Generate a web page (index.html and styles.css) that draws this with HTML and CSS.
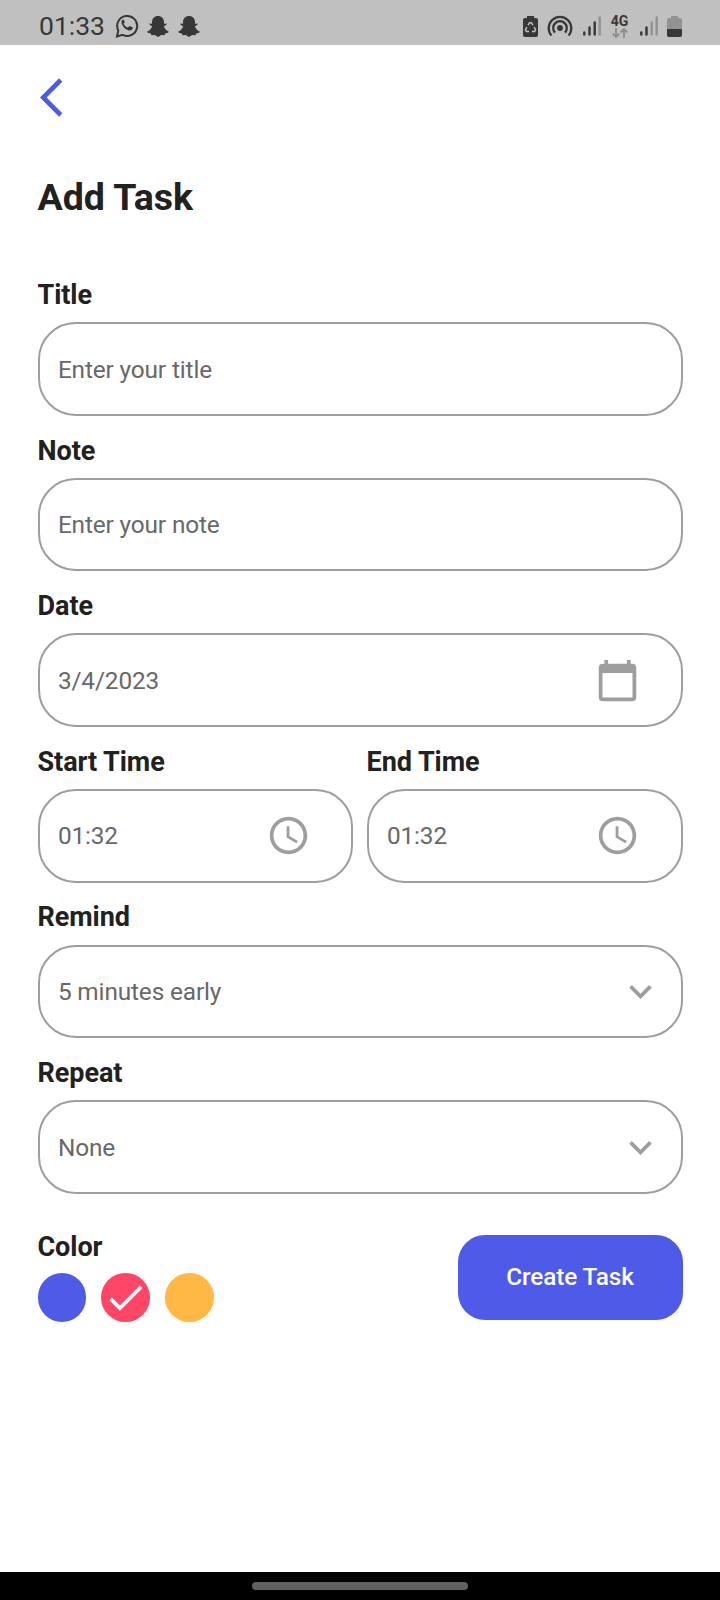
FILE: index.html
```html
<!DOCTYPE html>
<html lang="en">
<head>
<meta charset="utf-8">
<title>Add Task</title>
<link rel="stylesheet" href="styles.css">
</head>
<body>
<div class="screen">
  <header class="status">
    <span class="clock">01:33</span>
    <svg class="whatsapp" width="24" height="26" viewBox="0 0 24 26"><path d="M2 23.5l1.3-6A10 10 0 1 1 7.6 21.800z" fill="none" stroke="#373737" stroke-width="2"/><path d="M8.200 6.500c-1.600.8-2 2.300-1.500 3.900 1.200 3.800 4 6.200 7.300 7 1.700.4 3.500-.5 3.800-2.300l-.2-.8-3-1.400-1.800 1.700c-2-.7-3.500-2.100-4.200-3.800l1.200-1.500-1-2.600z" fill="#373737"/></svg>
    <svg class="snap" width="22" height="21" viewBox="0 0 22 21"><path id="ghost" d="M11 0C7.400 0 5 2.600 5 6v1.700L2.400 7.500l.4 1.400 2.300 1.300C4.500 12.800 2.500 14.600.3 15.400l.4 1.400 3.100.8.700 1.600 3.200-.1L11 21l3.300-1.900 3.200.1.700-1.600 3.100-.8.400-1.400c-2.200-.8-4.200-2.600-4.800-5.200l2.300-1.300.4-1.400-2.600.2V6c0-3.400-2.400-6-6-6z" fill="#373737"/></svg>
    <svg class="snap" width="22" height="21" viewBox="0 0 22 21"><use href="#ghost"/></svg>
    <span class="spacer"></span>
    <svg class="saver" width="15" height="21" viewBox="0 0 15 21"><path d="M4 0h7v2h2a2 2 0 0 1 2 2v15a2 2 0 0 1-2 2H2a2 2 0 0 1-2-2V4a2 2 0 0 1 2-2h2z" fill="#373737"/><path d="M5 9.200l1.600-2.500h1.800l1.600 2.500M11.200 11l1.300 2.700-.9 1.800H9M6 15.500H3.400l-.9-1.800L3.800 11" fill="none" stroke="#c0c0c0" stroke-width="1.500"/></svg>
    <svg class="cast" width="26" height="22" viewBox="0 0 26 22"><g fill="none" stroke="#373737" stroke-width="2.300"><path d="M4.400 20.500A11.300 11.300 0 1 1 21.600 20.500"/><path d="M8 17.600A6.800 6.800 0 1 1 18 17.600"/></g><circle cx="13" cy="13" r="2.900" fill="#373737"/></svg>
    <svg class="signal" width="18" height="20" viewBox="0 0 18 20"><g stroke-width="2.400" stroke-linecap="round" stroke="#373737"><path d="M1.300 16.500v2M6.500 11.500v7M11.700 6.500v12"/><path d="M16.700 1.500v17" stroke="#929292"/></g></svg>
    <span class="network"><b>4G</b><svg width="16" height="10" viewBox="0 0 16 10"><path d="M4 0v9M.7 5.700L4 9l3.300-3.300M12 10V1M8.700 4.300L12 1l3.300 3.300" fill="none" stroke="#8a8a8a" stroke-width="1.700"/></svg></span>
    <svg class="signal" width="18" height="20" viewBox="0 0 18 20"><g stroke-width="2.400" stroke-linecap="round" stroke="#373737"><path d="M1.300 16.500v2M6.500 11.500v7"/><path d="M11.700 6.500v12M16.700 1.500v17" stroke="#929292"/></g></svg>
    <svg class="battery" width="15" height="21" viewBox="0 0 15 21"><path d="M4 0h7v2h2a2 2 0 0 1 2 2v15a2 2 0 0 1-2 2H2a2 2 0 0 1-2-2V4a2 2 0 0 1 2-2h2z" fill="#929292"/><path d="M0 13h15v6a2 2 0 0 1-2 2H2a2 2 0 0 1-2-2z" fill="#373737"/></svg>
  </header>

  <main class="page">
    <svg class="back" width="23" height="39" viewBox="0 0 23 39"><path d="M20.700 2L3.200 19.500l17.500 17.500" fill="none" stroke="#4e5ae8" stroke-width="4.700"/></svg>
    <h1 class="heading">Add Task</h1>

    <label class="label">Title</label>
    <div class="box"><span>Enter your title</span></div>

    <label class="label">Note</label>
    <div class="box"><span>Enter your note</span></div>

    <label class="label">Date</label>
    <div class="box"><span>3/4/2023</span>
      <svg class="icon" viewBox="0 0 24 24"><path d="M20 3h-1V1h-2v2H7V1H5v2H4c-1.100 0-2 .9-2 2v16c0 1.100.9 2 2 2h16c1.100 0 2-.9 2-2V5c0-1.100-.9-2-2-2zm0 18H4V8h16v13z"/></svg>
    </div>

    <div class="times">
      <div class="time">
        <label class="label">Start Time</label>
        <div class="box"><span>01:32</span>
          <svg class="icon" viewBox="0 0 24 24"><path id="time" d="M11.990 2C6.470 2 2 6.480 2 12s4.470 10 9.990 10C17.520 22 22 17.520 22 12S17.520 2 11.990 2zM12 20c-4.420 0-8-3.580-8-8s3.580-8 8-8 8 3.580 8 8-3.580 8-8 8zm.5-13H11v6l5.250 3.150.75-1.230-4.500-2.670z"/></svg>
        </div>
      </div>
      <div class="time">
        <label class="label">End Time</label>
        <div class="box"><span>01:32</span>
          <svg class="icon" viewBox="0 0 24 24"><use href="#time"/></svg>
        </div>
      </div>
    </div>

    <label class="label">Remind</label>
    <div class="box select"><span>5 minutes early</span>
      <svg class="icon" viewBox="0 0 24 24"><path id="down" d="M7.410 8.590L12 13.170l4.590-4.580L18 10l-6 6-6-6z"/></svg>
    </div>

    <label class="label">Repeat</label>
    <div class="box select"><span>None</span>
      <svg class="icon" viewBox="0 0 24 24"><use href="#down"/></svg>
    </div>

    <div class="footer">
      <div class="colors">
        <div class="caption">Color</div>
        <div class="swatches">
          <span class="swatch blue"></span>
          <span class="swatch pink"><svg width="45" height="45" viewBox="0 0 24 24"><path d="M9 16.200L4.800 12l-1.400 1.400L9 19 21 7l-1.400-1.400L9 16.200z" fill="#fff"/></svg></span>
          <span class="swatch orange"></span>
        </div>
      </div>
      <button class="create">Create Task</button>
    </div>
  </main>

  <div class="nav"><span class="handle"></span></div>
</div>
</body>
</html>
```

FILE: styles.css
```css
* { box-sizing: border-box; }
body { margin: 0; font-family: Roboto, sans-serif; color: #212121; background: #fff; }
.screen { width: 720px; height: 1600px; display: flex; flex-direction: column; overflow: hidden; }

.status { height: 45px; flex: none; background: #c0c0c0; display: flex; align-items: flex-start; padding: 0 38.500px 0 39px; color: #373737; }
.status svg { display: block; flex: none; }
.clock { font-size: 26.500px; line-height: 30px; width: 67px; margin-top: 11px; white-space: nowrap; }
.whatsapp { margin: 13px 0 0 8.500px; }
.snap { margin: 16px 0 0 9px; }
.whatsapp + .snap { margin-left: 8px; }
.spacer { flex: 1; }
.saver { margin-top: 15.500px; }
.cast { margin: 15px 0 0 9px; }
.signal { margin: 16px 0 0 10px; }
.network { width: 18px; margin: 14px 0 0 10px; display: flex; flex-direction: column; align-items: center; }
.network b { font-size: 14px; line-height: 14px; }
.battery { margin: 15.500px 0 0 9px; }
.network + .signal { margin-left: 11px; }

.page { flex: 1; padding: 33px 37.500px 0; }
.back { display: block; margin-left: 2.500px; }
.heading { margin: 58px 0 0; height: 85.200px; font-size: 37.500px; line-height: 44px; font-weight: 700; }
.label { display: flex; align-items: flex-end; height: 62px; padding-bottom: 11.300px; font-size: 27px; line-height: 32px; font-weight: 700; letter-spacing: -0.05px; }
.box { height: 93.650px; border: 2px solid #9e9e9e; border-radius: 37.500px; padding: 0 40.750px 0 18.400px; display: flex; align-items: center; justify-content: space-between; font-size: 24.375px; letter-spacing: -0.130px; color: #686868; }
.icon { width: 45px; height: 45px; fill: #9e9e9e; }
.select { padding-right: 18px; }
.times { display: grid; grid-template-columns: 1fr 1fr; gap: 13.125px; }

.footer { display: flex; justify-content: space-between; align-items: flex-start; margin-top: 41px; }
.caption { font-size: 27px; line-height: 32px; font-weight: 700; letter-spacing: -0.05px; margin-top: -4px; }
.swatches { display: flex; gap: 15px; margin-top: 10px; }
.swatch { width: 48.750px; height: 48.750px; border-radius: 50%; display: flex; align-items: center; justify-content: center; }
.blue { background: #4e5ae8; }
.pink { background: #ff4667; }
.orange { background: #ffb746; }
.create { width: 225px; height: 84.500px; border: 0; border-radius: 27px; background: #4e5ae8; color: #fff; font-family: inherit; font-size: 24.375px; letter-spacing: -0.100px; font-weight: 500; padding: 0 0 2px; }

.nav { height: 28px; flex: none; background: #000; display: flex; justify-content: center; padding-top: 10px; }
.handle { width: 216px; height: 8px; border-radius: 4px; background: #606060; }
```
